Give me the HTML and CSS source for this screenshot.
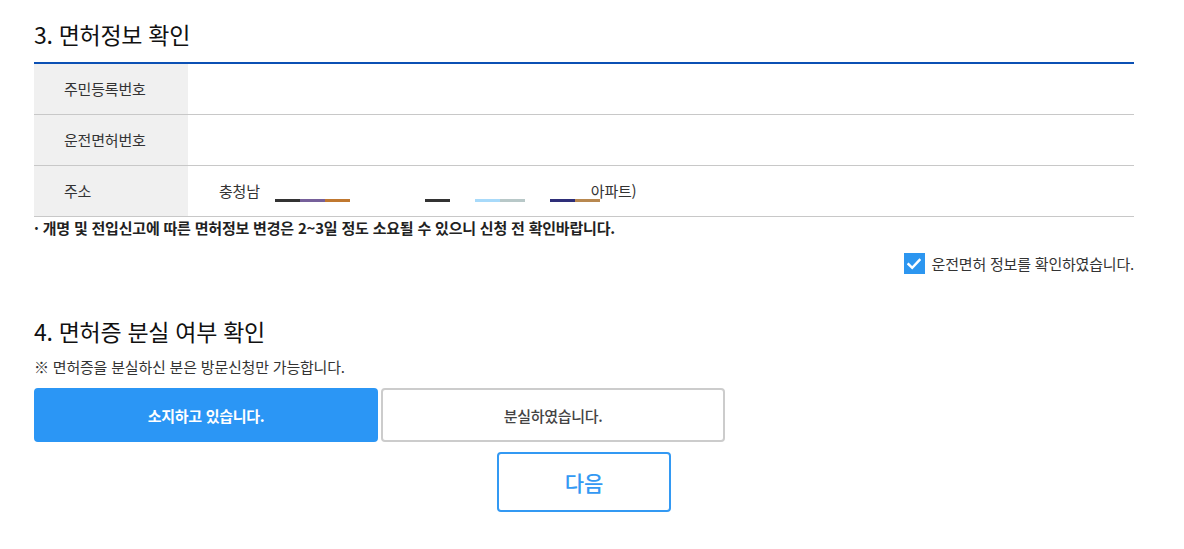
FILE: index.html
```html
<!DOCTYPE html>
<html lang="ko">
<head>
<meta charset="utf-8">
<title>면허정보 확인</title>
<link rel="stylesheet" href="styles.css">
</head>
<body>
<div class="page">
  <section class="sec sec-info">
    <h2 class="title">3. 면허정보 확인</h2>
    <div class="table">
      <div class="row">
        <div class="th">주민등록번호</div>
        <div class="td"></div>
      </div>
      <div class="row">
        <div class="th">운전면허번호</div>
        <div class="td"></div>
      </div>
      <div class="row">
        <div class="th">주소</div>
        <div class="td addr">
          <span class="addr-text">충청남</span><span class="mask">
            <span class="seg" style="background:#333333"></span><span class="seg" style="background:#76609a"></span><span class="seg" style="background:#c07830"></span><span class="gap" style="width:75px"></span><span class="seg" style="background:#333333"></span><span class="gap" style="width:25px"></span><span class="seg" style="background:#a8dafa"></span><span class="seg" style="background:#b8c8c8"></span><span class="gap" style="width:25px"></span><span class="seg" style="background:#2e2e78"></span><span class="seg" style="background:#b88850"></span></span><span class="addr-tail">아파트)</span>
        </div>
      </div>
    </div>
    <p class="note">· 개명 및 전입신고에 따른 면허정보 변경은 2~3일 정도 소요될 수 있으니 신청 전 확인바랍니다.</p>
    <label class="check">
      <span class="box">
        <svg width="14" height="12" viewBox="0 0 14 12"><path d="M1.5 6.2 L5.2 9.8 L12.5 2" fill="none" stroke="#fff" stroke-width="2.4" stroke-linecap="square"/></svg>
      </span>
      <span class="check-text">운전면허 정보를 확인하였습니다.</span>
    </label>
  </section>

  <section class="sec sec-lost">
    <h2 class="title">4. 면허증 분실 여부 확인</h2>
    <p class="guide">※ 면허증을 분실하신 분은 방문신청만 가능합니다.</p>
    <div class="choices">
      <button class="choice on">소지하고 있습니다.</button>
      <button class="choice">분실하였습니다.</button>
    </div>
    <div class="next-wrap">
      <button class="next">다음</button>
    </div>
  </section>
</div>
</body>
</html>
```

FILE: styles.css
```css
* { box-sizing: border-box; }
html, body { margin: 0; padding: 0; background: #fff; }
body {
  font-family: "Noto Sans CJK KR", "Noto Sans", sans-serif;
  color: #222;
}
.page {
  width: 1100px;
  margin-left: 34px;
}
.title {
  margin: 0;
  font-size: 23px;
  font-weight: 400;
  line-height: 32px;
  color: #111;
  letter-spacing: -0.3px;
}
.sec-info { padding-top: 18px; }
.sec-info .title { margin-bottom: 12px; }
.table {
  border-top: 2px solid #0b50b4;
}
.row {
  display: flex;
  height: 51px;
  border-bottom: 1px solid #c8c8c8;
}
.th {
  width: 154px;
  background: #f0f0f0;
  padding-left: 30px;
  font-size: 15px;
  line-height: 50px;
  color: #333;
  letter-spacing: -0.2px;
}
.td { flex: 1; }
.addr {
  display: flex;
  align-items: flex-start;
  padding-left: 31px;
  padding-top: 15px;
  font-size: 15px;
  color: #333;
  line-height: 20px;
  letter-spacing: -0.2px;
}
.addr-text { display: inline-block; }
.mask {
  display: flex;
  margin-top: 18px;
  margin-left: 15px;
  height: 3px;
}
.seg { display: block; width: 25px; height: 3px; }
.gap { display: block; height: 3px; }
.addr-tail {
  display: inline-block;
  margin-left: -9px;
  white-space: nowrap;
}
.note {
  margin: 2px 0 0;
  font-size: 15px;
  font-weight: 700;
  line-height: 18px;
  color: #222;
  letter-spacing: -0.2px;
}
.check {
  display: flex;
  justify-content: flex-end;
  align-items: center;
  margin-top: 16px;
  gap: 7px;
}
.box {
  width: 21px;
  height: 21px;
  background: #2c96f0;
  display: flex;
  align-items: center;
  justify-content: center;
}
.check-text {
  font-size: 15px;
  color: #333;
  line-height: 21px;
  letter-spacing: -0.2px;
}
.sec-lost { padding-top: 41px; }
.guide {
  margin: 11px 0 0;
  font-size: 15px;
  line-height: 18px;
  color: #333;
  letter-spacing: -0.2px;
}
.choices {
  display: flex;
  gap: 3px;
  margin-top: 12px;
}
.choice {
  width: 344px;
  height: 54px;
  border: 2px solid #cccccc;
  border-radius: 4px;
  background: #fff;
  font-family: inherit;
  font-size: 15px;
  font-weight: 500;
  color: #444;
  padding: 0;
  letter-spacing: -0.3px;
}
.choice.on {
  background: #2b96f5;
  border-color: #2b96f5;
  color: #fff;
  font-weight: 700;
}
.next-wrap {
  display: flex;
  justify-content: center;
  margin-top: 10px;
}
.next {
  width: 174px;
  height: 60px;
  border: 2px solid #3399f3;
  border-radius: 4px;
  background: #fff;
  color: #3399f3;
  font-family: inherit;
  font-size: 21px;
  font-weight: 500;
  padding: 0;
}
```
